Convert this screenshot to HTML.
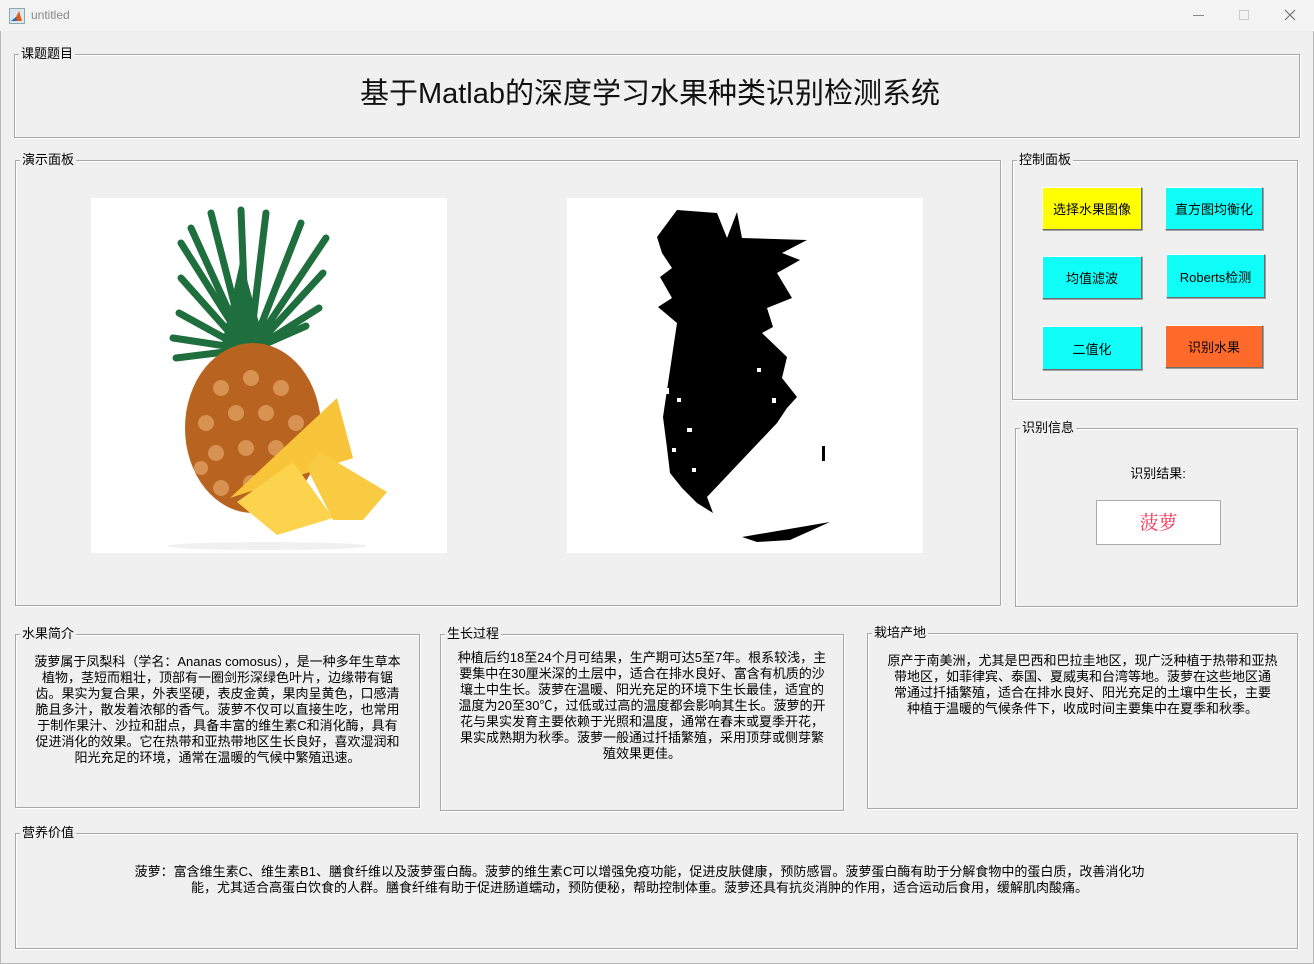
<!DOCTYPE html>
<html><head><meta charset="utf-8"><style>
*{margin:0;padding:0;box-sizing:border-box}
body{width:1314px;height:964px;background:#f0f0f0;font-family:"Liberation Sans","Noto Sans CJK SC",sans-serif;font-size:13px;color:#000;position:relative;overflow:hidden}
.win{position:absolute;left:0;top:0;width:1314px;height:964px;border:1px solid #b8b8b8;border-radius:8px 8px 0 0}
.tb{position:absolute;left:0;top:0;width:1314px;height:31px;background:#f3f3f3}
.fs{position:absolute;border:1px solid #a8a8a8;box-shadow:inset 1px 1px 0 #fff,1px 1px 0 #fff}
.lg{position:absolute;top:-9px;left:4px;background:#f0f0f0;padding:0 2px;font-size:13px;line-height:16px;white-space:nowrap}
.txt{position:absolute;text-align:center;font-size:13px;line-height:16px;white-space:nowrap}
.btn{position:absolute;border:1px solid;border-color:#fff #6e6e6e #6e6e6e #fff;text-align:center;font-size:13px;display:flex;align-items:center;justify-content:center;box-shadow:1px 1px 0 #a0a0a0}
</style></head><body>
<div class="win"></div>
<div class="tb">
<svg style="position:absolute;left:9px;top:8px" width="16" height="16"><rect x="0.5" y="0.5" width="15" height="15" fill="#dde6ef" stroke="#8aa"/><path d="M2 13 L7 9 L10 3 L13 13 Z" fill="#e05a1a"/><path d="M2 13 L7 9 L8 13Z" fill="#2a6fb5"/></svg>
<span style="position:absolute;left:31px;top:8px;color:#888;font-size:12px">untitled</span>
<div style="position:absolute;left:1193px;top:15px;width:11px;height:1px;background:#888"></div>
<div style="position:absolute;left:1239px;top:10px;width:10px;height:10px;border:1px solid #ccc"></div>
<svg style="position:absolute;left:1284px;top:9px" width="12" height="12"><path d="M1 1L11 11M11 1L1 11" stroke="#666" stroke-width="1"/></svg>
</div>

<div class="fs" style="left:14px;top:54px;width:1286px;height:84px"><span class="lg">课题题目</span></div>
<div style="position:absolute;left:0;width:1300px;top:75px;text-align:center;font-size:29px;line-height:38px;color:#111">基于Matlab的深度学习水果种类识别检测系统</div>

<div class="fs" style="left:15px;top:160px;width:986px;height:446px"><span class="lg">演示面板</span></div>
<svg style="position:absolute;left:91px;top:198px" width="356" height="355" viewBox="0 0 356 355">
<rect width="356" height="355" fill="#fff"/>
<ellipse cx="176" cy="348" rx="100" ry="4" fill="#f0f0f0"/>
<g stroke="#1f6e3e" stroke-width="7" stroke-linecap="round" fill="none">
<path d="M150 140 L100 30"/><path d="M152 140 L120 15"/><path d="M155 140 L150 12"/><path d="M160 140 L175 15"/><path d="M165 140 L210 25"/><path d="M168 140 L235 40"/><path d="M168 145 L232 75"/><path d="M168 148 L228 110"/><path d="M165 150 L215 128"/>
<path d="M150 140 L90 45"/><path d="M148 145 L90 80"/><path d="M148 148 L88 115"/><path d="M148 150 L82 140"/><path d="M150 152 L85 160"/>
</g>
<path d="M130 150 L150 60 L175 150Z" fill="#1f6e3e"/>
<ellipse cx="162" cy="230" rx="68" ry="85" fill="#b8631f"/>
<g fill="#e6a767" opacity=".7">
<circle cx="130" cy="190" r="8"/><circle cx="160" cy="180" r="8"/><circle cx="190" cy="190" r="8"/><circle cx="115" cy="225" r="8"/><circle cx="145" cy="215" r="8"/><circle cx="175" cy="215" r="8"/><circle cx="205" cy="225" r="8"/><circle cx="125" cy="255" r="8"/><circle cx="155" cy="250" r="8"/><circle cx="185" cy="250" r="8"/><circle cx="130" cy="290" r="8"/><circle cx="160" cy="285" r="8"/><circle cx="110" cy="270" r="7"/>
</g>
<polygon points="139,300 246,200 262,260 225,272" fill="#f8c43a"/>
<polygon points="146,304 202,264 242,320 186,337" fill="#fbd34c"/>
<polygon points="216,270 229,254 296,294 272,322 242,322" fill="#f9cb42"/>
</svg>
<svg style="position:absolute;left:567px;top:198px" width="356" height="355" viewBox="0 0 356 355">
<rect width="356" height="355" fill="#fff"/>
<polygon fill="#000" points="90,39 110,12 150,15 160,40 170,14 175,40 240,42 215,55 233,62 210,75 225,100 200,110 206,129 195,135 220,159 215,180 230,199 220,210 210,225 140,299 146,315 130,305 115,290 103,275 100,250 96,219 103,172 110,125 91,109 105,100 93,79 105,70 95,55"/>
<g fill="#fff">
<rect x="110" y="200" width="4" height="4"/><rect x="120" y="230" width="5" height="4"/><rect x="105" y="250" width="4" height="4"/><rect x="190" y="170" width="4" height="4"/><rect x="205" y="200" width="4" height="5"/><rect x="125" y="270" width="4" height="4"/><rect x="98" y="190" width="4" height="6"/>
</g>
<polygon fill="#000" points="175,339 263,324 223,342 190,344"/>
<rect x="255" y="248" width="3" height="15" fill="#000"/>
</svg>

<div class="fs" style="left:1012px;top:160px;width:286px;height:240px"><span class="lg">控制面板</span></div>
<div class="btn" style="left:1042px;top:187px;width:100px;height:43px;background:#ffff00">选择水果图像</div>
<div class="btn" style="left:1165px;top:187px;width:98px;height:43px;background:#0ffff8">直方图均衡化</div>
<div class="btn" style="left:1042px;top:256px;width:100px;height:43px;background:#0ffff8">均值滤波</div>
<div class="btn" style="left:1166px;top:254px;width:99px;height:44px;background:#0ffff8">Roberts检测</div>
<div class="btn" style="left:1042px;top:326px;width:100px;height:44px;background:#0ffff8">二值化</div>
<div class="btn" style="left:1165px;top:325px;width:98px;height:43px;background:#ff6a2a">识别水果</div>

<div class="fs" style="left:1015px;top:428px;width:283px;height:179px"><span class="lg">识别信息</span></div>
<div class="txt" style="left:1096px;width:124px;top:466px">识别结果:</div>
<div style="position:absolute;left:1096px;top:500px;width:125px;height:45px;background:#fff;border:1px solid #aaa;text-align:center;font-family:'Noto Serif CJK SC',serif;color:#ff3355;font-size:19px;line-height:42px">菠萝</div>

<div class="fs" style="left:15px;top:634px;width:405px;height:174px"><span class="lg">水果简介</span></div>
<div class="txt" style="left:15px;width:405px;top:654px">菠萝属于凤梨科（学名：Ananas comosus），是一种多年生草本<br>植物，茎短而粗壮，顶部有一圈剑形深绿色叶片，边缘带有锯<br>齿。果实为复合果，外表坚硬，表皮金黄，果肉呈黄色，口感清<br>脆且多汁，散发着浓郁的香气。菠萝不仅可以直接生吃，也常用<br>于制作果汁、沙拉和甜点，具备丰富的维生素C和消化酶，具有<br>促进消化的效果。它在热带和亚热带地区生长良好，喜欢湿润和<br>阳光充足的环境，通常在温暖的气候中繁殖迅速。</div>

<div class="fs" style="left:440px;top:634px;width:404px;height:177px"><span class="lg">生长过程</span></div>
<div class="txt" style="left:440px;width:404px;top:650px">种植后约18至24个月可结果，生产期可达5至7年。根系较浅，主<br>要集中在30厘米深的土层中，适合在排水良好、富含有机质的沙<br>壤土中生长。菠萝在温暖、阳光充足的环境下生长最佳，适宜的<br>温度为20至30℃，过低或过高的温度都会影响其生长。菠萝的开<br>花与果实发育主要依赖于光照和温度，通常在春末或夏季开花，<br>果实成熟期为秋季。菠萝一般通过扦插繁殖，采用顶芽或侧芽繁<br>殖效果更佳。</div>

<div class="fs" style="left:867px;top:633px;width:431px;height:176px"><span class="lg">栽培产地</span></div>
<div class="txt" style="left:867px;width:431px;top:653px">原产于南美洲，尤其是巴西和巴拉圭地区，现广泛种植于热带和亚热<br>带地区，如菲律宾、泰国、夏威夷和台湾等地。菠萝在这些地区通<br>常通过扦插繁殖，适合在排水良好、阳光充足的土壤中生长，主要<br>种植于温暖的气候条件下，收成时间主要集中在夏季和秋季。</div>

<div class="fs" style="left:15px;top:833px;width:1283px;height:116px"><span class="lg">营养价值</span></div>
<div class="txt" style="left:-2px;width:1283px;top:864px">菠萝：富含维生素C、维生素B1、膳食纤维以及菠萝蛋白酶。菠萝的维生素C可以增强免疫功能，促进皮肤健康，预防感冒。菠萝蛋白酶有助于分解食物中的蛋白质，改善消化功<br>能，尤其适合高蛋白饮食的人群。膳食纤维有助于促进肠道蠕动，预防便秘，帮助控制体重。菠萝还具有抗炎消肿的作用，适合运动后食用，缓解肌肉酸痛。</div>
</body></html>
